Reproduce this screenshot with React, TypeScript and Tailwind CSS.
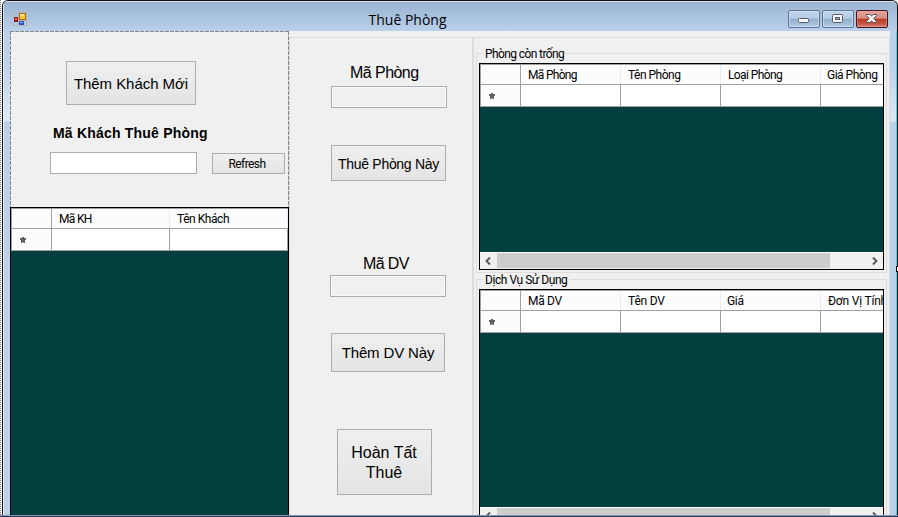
import React from "react";

const small = "font-[Roboto,'Liberation_Sans',sans-serif] text-[12px] leading-[14px] whitespace-nowrap text-black";

function FormIcon() {
  return (
    <svg width="14" height="14" viewBox="0 0 14 14" shapeRendering="crispEdges">
      <path d="M0.5 4.5V0.5H5.5V13.5H0.5V9.5M5.5 8.5H13.5V13.5H5.5M5.5 .5H13.5V8.5" fill="none" stroke="#b9b3b4" />
      <rect x="1" y="5" width="4" height="5" fill="#9b1714" />
      <rect x="2" y="6" width="2" height="2" fill="#f06a50" />
      <rect x="6" y="1" width="7" height="7" fill="#a36d10" />
      <rect x="7" y="2" width="5" height="5" fill="#fbc52c" />
      <rect x="7" y="2" width="4" height="2" fill="#ffe892" />
      <rect x="6" y="9" width="5" height="4" fill="#2856c2" />
      <rect x="7" y="10" width="3" height="1" fill="#8db5fa" />
    </svg>
  );
}

function CaptionButton({ kind }: { kind: "min" | "max" | "close" }) {
  const close = kind === "close";
  return (
    <div
      className={
        close
          ? "h-[18px] w-8 rounded-[2px] border border-[#431422] bg-[linear-gradient(#e5a49b_0%,#d98d80_45%,#b83c25_50%,#c75540_80%,#dd8a78_100%)] shadow-[inset_0_0_0_1px_#e9b0a866]"
          : "h-[18px] w-8 rounded-[2px] border border-[#5f7590] bg-[linear-gradient(#c0d5eb_0%,#b4cbe3_45%,#93afcd_50%,#a3bedb_80%,#b8d2ec_100%)] shadow-[inset_0_0_0_1px_#d5e4f399]"
      }
    >
      <svg width="30" height="16" viewBox="0 0 30 16">
        {kind === "min" && <rect x="9.5" y="7.5" width="10" height="4" rx="1" fill="#f7f7f7" stroke="#555a6c" />}
        {kind === "max" && (
          <>
            <rect x="9.5" y="3.5" width="10" height="8" rx="1" fill="#f7f7f7" stroke="#555a6c" />
            <rect x="12.5" y="6.5" width="4" height="2" fill="#9bb5d2" stroke="#555a6c" />
          </>
        )}
        {close && (
          <path
            d="M9.5 3.5H13L14.5 5.2 16 3.5H19.5V4.5L16.8 7.5 19.5 10.5V11.5H16L14.5 9.8 13 11.5H9.5V10.5L12.2 7.5 9.5 4.5Z"
            fill="#f7f7f7"
            stroke="#555063"
          />
        )}
      </svg>
    </div>
  );
}

function Star() {
  return (
    <svg width="6" height="6" viewBox="0 0 6 6" className="mt-px">
      <path d="M2 0H4V1H6V3H5V6H3.5V5H2.5V6H1V3H0V1H2Z" fill="#606060" />
    </svg>
  );
}

type Column = { title: string; width: string; spacing: string };

function DataGrid({ columns }: { columns: Column[] }) {
  return (
    <div className="w-full shrink-0 overflow-hidden border-l border-t border-[#a0a0a0]">
      <div className="flex h-5 w-max border-b border-[#a0a0a0] bg-[#fcfcfc]">
        <div className="w-10 shrink-0 border-r border-[#a0a0a0]" />
        {columns.map((c) => (
          <div key={c.title} className={"shrink-0 border-r border-[#e5edf9] pl-[7px] pt-[3px] " + small + " " + c.width}>
            <span className={c.spacing}>{c.title}</span>
          </div>
        ))}
      </div>
      <div className="flex h-[22px] w-max border-b border-[#a0a0a0] bg-white">
        <div className="flex w-10 shrink-0 items-center border-r border-[#a0a0a0] bg-[#fcfcfc] pl-[8px]">
          <Star />
        </div>
        {columns.map((c) => (
          <div key={c.title} className={"shrink-0 border-r border-[#a0a0a0] " + c.width} />
        ))}
      </div>
    </div>
  );
}

function ScrollBar() {
  return (
    <div className="flex h-[17px] shrink-0 items-stretch border-t border-white bg-[#f0f0f0]">
      <div className="flex w-[17px] items-center justify-center pr-px">
        <svg width="8" height="8" viewBox="0 0 8 8">
          <path d="M6 0.5L2.5 4L6 7.5" fill="none" stroke="#555" strokeWidth="1.9" />
        </svg>
      </div>
      <div className="mb-px w-[333px] bg-[#cdcdcd]" />
      <div className="flex flex-1 items-center justify-end pr-[4px]">
        <svg width="8" height="8" viewBox="0 0 8 8">
          <path d="M2 0.5L5.5 4L2 7.5" fill="none" stroke="#555" strokeWidth="1.9" />
        </svg>
      </div>
    </div>
  );
}

type GroupPanelProps = {
  title: string;
  spacing: string;
  columns: Column[];
  legendWidth: string;
  position: string;
  gridHeight: string;
  gridInset: string;
};

function GroupPanel({ title, spacing, columns, legendWidth, position, gridHeight, gridInset }: GroupPanelProps) {
  return (
    <section className={"ml-[3px] w-[411px] shrink-0 " + position}>
      <div className="flex h-[10px]">
        <div className="mt-[6px] h-1 w-[7px] shrink-0 border-l border-t border-[#dcdcdc]" />
        <div className={"shrink-0 pl-[2px] " + small + " " + legendWidth}>
          <span className={spacing}>{title}</span>
        </div>
        <div className="mt-[6px] h-1 flex-1 border-r border-t border-[#dcdcdc]" />
      </div>
      <div className={"border-x border-b border-[#dcdcdc] pb-[2px] pl-[2px] " + gridInset}>
        <div className={"flex w-[405px] flex-col border border-black bg-[#024040] " + gridHeight}>
          <DataGrid columns={columns} />
          <div className="flex-1" />
          <ScrollBar />
        </div>
      </div>
    </section>
  );
}

function FormButton({ children, box }: { children: React.ReactNode; box: string }) {
  return (
    <button className={"flex shrink-0 items-center justify-center whitespace-nowrap border border-[#adadad] bg-linear-to-b from-[#efefef] to-[#e4e4e4] text-black " + box}>
      {children}
    </button>
  );
}

const rooms: Column[] = [
  { title: "Mã Phòng", width: "w-[100px]", spacing: "tracking-[-0.7px]" },
  { title: "Tên Phòng", width: "w-[100px]", spacing: "tracking-[-0.5px]" },
  { title: "Loại Phòng", width: "w-[100px]", spacing: "tracking-[-0.6px]" },
  { title: "Giá Phòng", width: "w-[100px]", spacing: "-ml-px tracking-[-0.5px]" },
];

const services: Column[] = [
  { title: "Mã DV", width: "w-[100px]", spacing: "tracking-[-0.3px]" },
  { title: "Tên DV", width: "w-[100px]", spacing: "tracking-[-0.2px]" },
  { title: "Giá", width: "w-[100px]", spacing: "-ml-px tracking-[-0.3px]" },
  { title: "Đơn Vị Tính", width: "w-[100px]", spacing: "tracking-[-0.2px]" },
];

const guests: Column[] = [
  { title: "Mã KH", width: "w-[118px]", spacing: "tracking-[-0.7px]" },
  { title: "Tên Khách", width: "w-[118px]", spacing: "tracking-[-0.45px]" },
];

export default function App() {
  return (
    <div className="relative flex h-[517px] w-[898px] flex-col overflow-hidden bg-white font-['Liberation_Sans',Arial,sans-serif] text-[16px] leading-[20px] text-black">
      <div className="flex h-[515px] shrink-0">
        <div className="w-px bg-[repeating-linear-gradient(#777_0_1px,#fff_1px_2px)]" />
        <div className="w-px bg-white" />
        <div className="flex w-[896px] flex-col overflow-hidden rounded-t-[6px] border-l border-r border-t border-[#111] bg-[#b9d1ea]">
          <header className="flex h-[30px] shrink-0 border-l border-t border-[#d5e2ef] bg-linear-to-b from-[#9ab4d2] to-[#b9d1ea] pl-[9px] pr-[9px]">
            <div className="pt-[10px]">
              <FormIcon />
            </div>
            <h1 className="flex-1 pt-[9px] text-center font-['Open_Sans','Noto_Sans',sans-serif] text-[14px] leading-[18px]">
              <span className="tracking-[0px]">Thuê Phòng</span>
            </h1>
            <div className="flex gap-[2px] pt-[8px]">
              <CaptionButton kind="min" />
              <CaptionButton kind="max" />
              <CaptionButton kind="close" />
            </div>
          </header>
          <div className="flex h-[484px] shrink-0">
            <div className="w-[7px] shrink-0 border-l border-[#eef4fa] bg-[linear-gradient(#b9d1ea_0px,#b9d1ea_30px,#dce9f6_90px,#b9d1ea_91px)]" />
            <main className="flex w-[880px] shrink-0 overflow-hidden bg-[#f0f0f0]">
              <section className="flex w-[279px] shrink-0 flex-col">
                <div className="flex h-[176px] shrink-0 flex-col bg-[repeating-linear-gradient(90deg,#888_0_4px,transparent_4px_5px),repeating-linear-gradient(#888_0_4px,transparent_4px_5px),repeating-linear-gradient(#888_0_4px,transparent_4px_5px)] bg-[size:100%_1px,1px_100%,1px_100%] bg-[position:0_0,0_0,100%_0] bg-no-repeat">
                  <div className="pl-[56px] pt-[30px]">
                    <FormButton box="h-[44px] w-[130px] pt-[2px] text-[15px]">
                      <span className="tracking-[-0.05px]">Thêm Khách Mới</span>
                    </FormButton>
                  </div>
                  <label className="mt-[18px] pl-[43px] text-[14px] font-bold leading-[20px]">
                    <span className="tracking-[0.2px]">Mã Khách Thuê Phòng</span>
                  </label>
                  <div className="mt-[9px] flex pl-[40px]">
                    <input className="h-[22px] w-[147px] border border-[#abadb3] bg-white" />
                    <div className="ml-[15px] pt-px">
                      <FormButton box="h-[21px] w-[73px] pr-[3px]">
                        <span className={small + " tracking-[-0.6px]"}>Refresh</span>
                      </FormButton>
                    </div>
                  </div>
                </div>
                <div className="flex-1 border-x border-t border-black bg-[#024040]">
                  <DataGrid columns={guests} />
                </div>
              </section>
              <section className="mt-[6px] flex w-[185px] shrink-0 flex-col border-l border-r-2 border-t border-[#dcdcdc] pl-[41px]">
                <label className="mt-[25px] pl-[19px]">
                  <span className="tracking-[-0.55px]">Mã Phòng</span>
                </label>
                <input className="mt-[3px] h-[22px] w-[116px] border border-[#abadb3] bg-[#f0f0f0] shadow-[inset_0_0_0_1px_#fafafa]" />
                <div className="mt-[37px]">
                  <FormButton box="h-[36px] w-[115px] pt-px text-[14px]">
                    <span className="tracking-[-0.3px]">Thuê Phòng Này</span>
                  </FormButton>
                </div>
                <label className="mt-[73px] pl-[32px]">
                  <span className="tracking-[-0.6px]">Mã DV</span>
                </label>
                <input className="-ml-px mt-px h-[22px] w-[116px] border border-[#abadb3] bg-[#f0f0f0] shadow-[inset_0_0_0_1px_#fafafa]" />
                <div className="mt-[36px]">
                  <FormButton box="h-[39px] w-[114px] text-[15px]">
                    <span className="tracking-[-0.15px]">Thêm DV Này</span>
                  </FormButton>
                </div>
                <div className="mt-[57px] pl-[6px]">
                  <FormButton box="h-[66px] w-[95px] pt-px pr-px">
                    <span>
                      Hoàn Tất
                      <br />
                      Thuê
                    </span>
                  </FormButton>
                </div>
              </section>
              <section className="mt-[6px] flex flex-1 flex-col border-r border-t border-[#dcdcdc]">
                <div className="-ml-px">
                  <GroupPanel
                    title="Phòng còn trống"
                    spacing="tracking-[-0.6px]"
                    columns={rooms}
                    legendWidth="w-[83px]"
                    position="mt-[9px]"
                    gridHeight="h-[207px]"
                    gridInset="pt-[6px]"
                  />
                  <GroupPanel
                    title="Dịch Vụ Sử Dụng"
                    spacing="tracking-[-0.45px]"
                    columns={services}
                    legendWidth="w-[87px]"
                    position=""
                    gridHeight="h-[236px]"
                    gridInset="pt-[6px]"
                  />
                </div>
              </section>
            </main>
            <div className="w-[6px] bg-[linear-gradient(#b9d1ea_0px,#b9d1ea_30px,#dce9f6_90px,#b9d1ea_91px)]" />
            <div className="w-px bg-[#2ed0ee]" />
          </div>
        </div>
      </div>
      <div className="h-px bg-[#8494b0]" />
      <div className="h-px bg-[#2b3d5e]" />
      <div className="absolute left-[896px] top-[266px] h-[6px] w-[5px] border border-black bg-white" />
    </div>
  );
}
